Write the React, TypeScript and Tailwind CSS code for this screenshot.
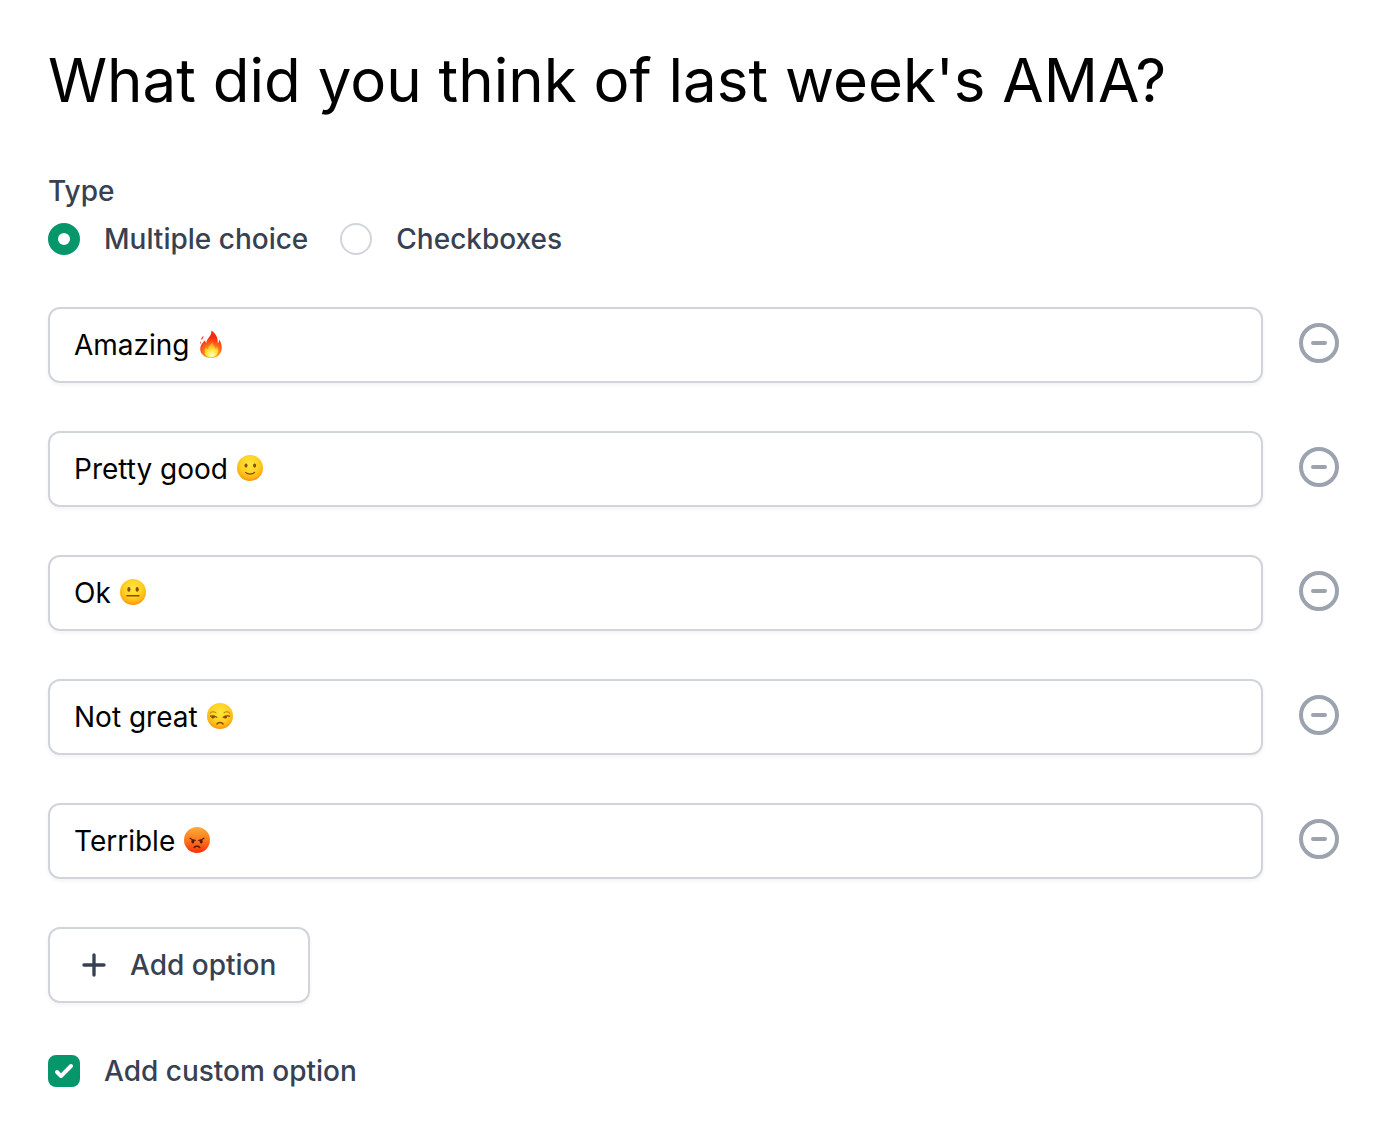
import { useState } from "react";

type Mood = "fire" | "smile" | "neutral" | "unamused" | "angry";

const initialOptions: { id: number; text: string; mood?: Mood }[] = [
  { id: 1, text: "Amazing", mood: "fire" },
  { id: 2, text: "Pretty good", mood: "smile" },
  { id: 3, text: "Ok", mood: "neutral" },
  { id: 4, text: "Not great", mood: "unamused" },
  { id: 5, text: "Terrible", mood: "angry" },
];

function Fire() {
  return (
    <>
      <defs>
        <radialGradient id="fire-outer" cx="14" cy="24" r="20" gradientUnits="userSpaceOnUse">
          <stop offset="0.3" stopColor="#ff9a1a" />
          <stop offset="0.55" stopColor="#ff5c18" />
          <stop offset="0.85" stopColor="#fb2710" />
        </radialGradient>
        <radialGradient id="fire-inner" cx="14" cy="25" r="11" gradientUnits="userSpaceOnUse">
          <stop offset="0" stopColor="#fffbd0" />
          <stop offset="0.45" stopColor="#ffe93b" />
          <stop offset="1" stopColor="#ffa726" />
        </radialGradient>
      </defs>
      <path
        d="M13.2 0.6C13.6 3 13 4.7 11.4 6.7 9.8 8.8 8.4 10.5 8.2 13 7.5 12.3 7.2 11.4 7.1 10.3 4.6 12.4 2.2 15.2 2.2 18.8 2.2 24 6.8 28 13 28 19.4 28 23.7 24 23.7 18 23.7 14.6 22.7 12 21.2 9.6 21.1 11.3 20.8 12.5 19.8 13.4 20.2 7.6 17.6 3.2 13.2 0.6Z"
        fill="url(#fire-outer)"
      />
      <path d="M5.4 6C5.8 7.8 4.6 8.8 3.5 9.9 2.8 8.2 3.9 7 5.4 6ZM2.9 11.4C3.2 12.4 2.9 13.4 2.4 14 1.9 13 2.2 12.1 2.9 11.4Z" fill="#ff3b1d" />
      <path
        d="M14.2 12.2C14.8 15.2 16.8 16.7 17.6 19.1 18.3 18.6 18.7 17.9 18.8 17.1 19.8 18.5 20.2 20 20 21.6 19.6 25.2 17 27.5 13.2 27.5 9.3 27.5 6.6 25 6.6 21.5 6.6 19.9 7.2 18.6 8 17.3 8.5 18.2 9 18.8 9.8 19.2 10.2 16.3 12.7 15 14.2 12.2Z"
        fill="url(#fire-inner)"
      />
    </>
  );
}

function Smile() {
  return (
    <>
      <circle cx="14" cy="14" r="13" fill="url(#yellow-face)" />
      <ellipse cx="10" cy="11.6" rx="1.5" ry="2.1" fill="#8a4a0a" />
      <ellipse cx="18.6" cy="11.6" rx="1.5" ry="2.1" fill="#8a4a0a" />
      <path d="M9.6 18.4C11.6 20.6 16.6 20.6 18.6 18.4" fill="none" stroke="#8a4a0a" strokeWidth="1.2" strokeLinecap="round" />
    </>
  );
}

function Neutral() {
  return (
    <>
      <circle cx="14" cy="14" r="13" fill="url(#yellow-face)" />
      <ellipse cx="9.9" cy="11.4" rx="1.6" ry="2.3" fill="#8a4a0a" />
      <ellipse cx="18.2" cy="11.4" rx="1.6" ry="2.3" fill="#8a4a0a" />
      <path d="M8 17.8H20" stroke="#8a4a0a" strokeWidth="1.5" strokeLinecap="round" />
    </>
  );
}

function Unamused() {
  return (
    <>
      <circle cx="14" cy="14" r="13" fill="url(#yellow-face)" />
      <path d="M4 11.2C5.5 9.4 8 9.3 10 10.6M18 10.6C20 9.3 22.5 9.4 24 11.2" fill="none" stroke="#b8740f" strokeWidth="1" strokeLinecap="round" />
      <path d="M4.4 14.2C6 13.8 8.6 14 10.8 15.2M17.2 15.2C19 14 21.6 13.8 23.6 14.2" fill="none" stroke="#8a4a0a" strokeWidth="1.3" strokeLinecap="round" />
      <ellipse cx="7" cy="15.2" rx="1.6" ry="1.4" fill="#8a4a0a" />
      <ellipse cx="19.4" cy="15.2" rx="1.6" ry="1.4" fill="#8a4a0a" />
      <path d="M11 22C12.2 20 15.8 20 17 22" fill="none" stroke="#8a4a0a" strokeWidth="1.5" strokeLinecap="round" />
    </>
  );
}

function Angry() {
  return (
    <>
      <circle cx="14" cy="14" r="13" fill="url(#red-face)" />
      <ellipse cx="9.8" cy="15.6" rx="1.5" ry="2" fill="#54190a" />
      <ellipse cx="18.2" cy="15.6" rx="1.5" ry="2" fill="#54190a" />
      <path d="M7 12.2C8.2 13.6 10 14.4 12.2 14.4M21 12.2C19.8 13.6 18 14.4 15.8 14.4" fill="none" stroke="#54190a" strokeWidth="1.2" strokeLinecap="round" />
      <path d="M11.2 21.4C12.4 19.9 15.6 19.9 16.8 21.4" fill="none" stroke="#54190a" strokeWidth="1.4" strokeLinecap="round" />
    </>
  );
}

const faces = { fire: Fire, smile: Smile, neutral: Neutral, unamused: Unamused, angry: Angry };

function Emoji({ mood }: { mood: Mood }) {
  const Face = faces[mood];
  return (
    <svg viewBox="0 0 28 28" role="img" aria-label={mood} className="mb-0.5 size-7 shrink-0">
      <Face />
    </svg>
  );
}

function FaceGradients() {
  return (
    <svg className="absolute size-0" aria-hidden="true">
      <defs>
        <radialGradient id="yellow-face" cx="0.5" cy="0.36" r="0.66">
          <stop offset="0" stopColor="#ffe63c" />
          <stop offset="0.5" stopColor="#ffd325" />
          <stop offset="0.8" stopColor="#ffb414" />
          <stop offset="1" stopColor="#f88a0c" />
        </radialGradient>
        <linearGradient id="red-face" x1="0" y1="0" x2="0" y2="1">
          <stop offset="0" stopColor="#fbac38" />
          <stop offset="0.5" stopColor="#fc7a1e" />
          <stop offset="1" stopColor="#fc2e0c" />
        </linearGradient>
      </defs>
    </svg>
  );
}

function TypeRadio({ label, checked, onChange }: { label: string; checked: boolean; onChange: () => void }) {
  return (
    <label className="flex items-center gap-6">
      <input
        type="radio"
        name="type"
        checked={checked}
        onChange={onChange}
        className="size-8 shrink-0 appearance-none rounded-full border-2 border-[#d1d5db] bg-white checked:border-[10px] checked:border-[#059669]"
      />
      {label}
    </label>
  );
}

export default function App() {
  const [type, setType] = useState<"choice" | "checkboxes">("choice");
  const [options, setOptions] = useState(initialOptions);
  const [custom, setCustom] = useState(true);

  const updateOption = (id: number, text: string) => {
    setOptions(options.map((o) => (o.id === id ? { ...o, text } : o)));
  };

  const addOption = () => {
    setOptions([...options, { id: Date.now(), text: "" }]);
  };

  return (
    <main className="bg-white py-12 pr-[51px] pl-12 font-['Inter',sans-serif] text-[28px] leading-10 font-medium text-[#374151]">
      <FaceGradients />
      <h1 className="mb-[59px] text-[60px] leading-16 font-normal text-black">What did you think of last week's AMA?</h1>

      <fieldset>
        <legend className="mb-2">Type</legend>
        <div className="flex flex-wrap gap-x-8">
          <TypeRadio label="Multiple choice" checked={type === "choice"} onChange={() => setType("choice")} />
          <TypeRadio label="Checkboxes" checked={type === "checkboxes"} onChange={() => setType("checkboxes")} />
        </div>
      </fieldset>

      <ul className="mt-12 flex flex-col gap-12">
        {options.map((option, i) => (
          <li key={option.id} className="flex items-start gap-8">
            <label className="flex min-w-0 flex-1 cursor-text items-center gap-2 rounded-xl border-2 border-[#d1d5db] bg-white px-6 py-4 shadow-[0_2px_4px_rgba(0,0,0,0.05)]">
              <input
                type="text"
                value={option.text}
                onChange={(e) => updateOption(option.id, e.target.value)}
                aria-label={`Option ${i + 1}`}
                className="h-10 min-w-0 field-sizing-content font-normal text-black outline-none"
              />
              {option.mood && <Emoji mood={option.mood} />}
            </label>
            <button
              type="button"
              aria-label="Remove option"
              onClick={() => setOptions(options.filter((o) => o.id !== option.id))}
              className="mt-3 text-[#9ca3af]"
            >
              <svg viewBox="0 0 24 24" fill="none" stroke="currentColor" strokeWidth="2" strokeLinecap="round" className="size-12">
                <path d="M15 12H9m12 0a9 9 0 11-18 0 9 9 0 0118 0z" />
              </svg>
            </button>
          </li>
        ))}
      </ul>

      <button
        type="button"
        onClick={addOption}
        className="mt-12 flex items-center gap-4 rounded-xl border-2 border-[#d1d5db] bg-white py-4 pr-8 pl-6 shadow-[0_2px_4px_rgba(0,0,0,0.05)]"
      >
        <svg viewBox="0 0 24 24" fill="none" stroke="currentColor" strokeWidth="2" strokeLinecap="round" className="size-10">
          <path d="M12 6v12M6 12h12" />
        </svg>
        Add option
      </button>

      <label className="mt-12 flex w-fit items-center gap-6">
        <span className="grid size-8 shrink-0">
          <input
            type="checkbox"
            checked={custom}
            onChange={(e) => setCustom(e.target.checked)}
            className="col-start-1 row-start-1 size-8 appearance-none rounded-lg border-2 border-[#d1d5db] bg-white checked:border-[#059669] checked:bg-[#059669]"
          />
          {custom && (
            <svg viewBox="0 0 16 16" fill="white" className="pointer-events-none col-start-1 row-start-1 size-8">
              <path d="M12.207 4.793a1 1 0 010 1.414l-5 5a1 1 0 01-1.414 0l-2-2a1 1 0 011.414-1.414L6.5 9.086l4.293-4.293a1 1 0 011.414 0z" />
            </svg>
          )}
        </span>
        Add custom option
      </label>
    </main>
  );
}
